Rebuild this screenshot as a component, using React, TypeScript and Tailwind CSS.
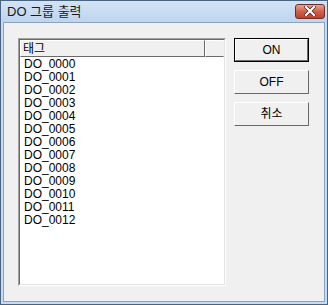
const items = Array.from({ length: 13 }, (_, i) => `DO_${String(i).padStart(4, '0')}`);

const font = { fontFamily: '"Liberation Sans", "Noto Sans CJK KR", sans-serif' };

function XpButton({ label, focused }: { label: string; focused?: boolean }) {
  return (
    <button
      className={`w-[75px] h-[24px] bg-[#f0f0f0] text-[12px] font-normal text-black leading-none ${
        focused ? 'border border-black' : ''
      }`}
    >
      <div className="w-full h-full border border-t-white border-l-white border-r-[#696969] border-b-[#696969] flex items-center justify-center">
        {label}
      </div>
    </button>
  );
}

export default function App() {
  return (
    <div style={font} className="w-[328px] h-[305px] bg-[#c6dbf2] border border-[#4a6381] flex flex-col">
      {/* title bar */}
      <div className="h-[21px] flex items-center justify-between pl-[6px] pr-[2px] bg-gradient-to-b from-[#d3e3f4] to-[#bed5ee]">
        <span className="text-[13px] text-[#1a1a1a] mt-[1px]">DO 그룹 출력</span>
        <div className="w-[30px] h-[15px] mt-[-1px] rounded-[3px] border border-[#6b2f27] bg-gradient-to-b from-[#e8a493] via-[#d1604a] to-[#b9442f] flex items-center justify-center">
          <svg width="12" height="10" viewBox="0 0 12 10">
            <path d="M2 1 L10 9 M10 1 L2 9" stroke="#4a1e15" strokeWidth="3.6" strokeLinecap="square" />
            <path d="M2 1 L10 9 M10 1 L2 9" stroke="#ffffff" strokeWidth="2.2" strokeLinecap="square" />
          </svg>
        </div>
      </div>
      {/* client area */}
      <div className="flex-1 mx-[2px] mb-[2px] bg-[#f0f0f0] border border-[#8aa4c0] flex gap-[8px] pl-[14px] pt-[15px] pb-[14px]">
        <div className="w-[208px] h-[248px] border border-t-[#a0a0a0] border-l-[#a0a0a0] border-r-white border-b-white">
          <div className="w-full h-full border border-t-[#696969] border-l-[#696969] border-r-[#e3e3e3] border-b-[#e3e3e3] bg-white flex flex-col">
            <div className="h-[17px] flex shrink-0">
              <div className="w-[185px] bg-[#f0f0f0] border border-t-white border-l-white border-r-[#696969] border-b-[#696969] text-[12px] leading-[14px] pl-[2px] flex items-center">
                태그
              </div>
              <div className="flex-1 bg-[#f0f0f0] border border-t-white border-l-white border-r-[#f0f0f0] border-b-[#696969]" />
            </div>
            <div className="pl-[4px] pt-[1px] flex flex-col">
              {items.map((it) => (
                <div key={it} className="h-[13px] text-[12px] leading-[13px] text-black">
                  {it}
                </div>
              ))}
            </div>
          </div>
        </div>
        <div className="flex flex-col gap-[8px]">
          <XpButton label="ON" focused />
          <XpButton label="OFF" />
          <XpButton label="취소" />
        </div>
      </div>
    </div>
  );
}
